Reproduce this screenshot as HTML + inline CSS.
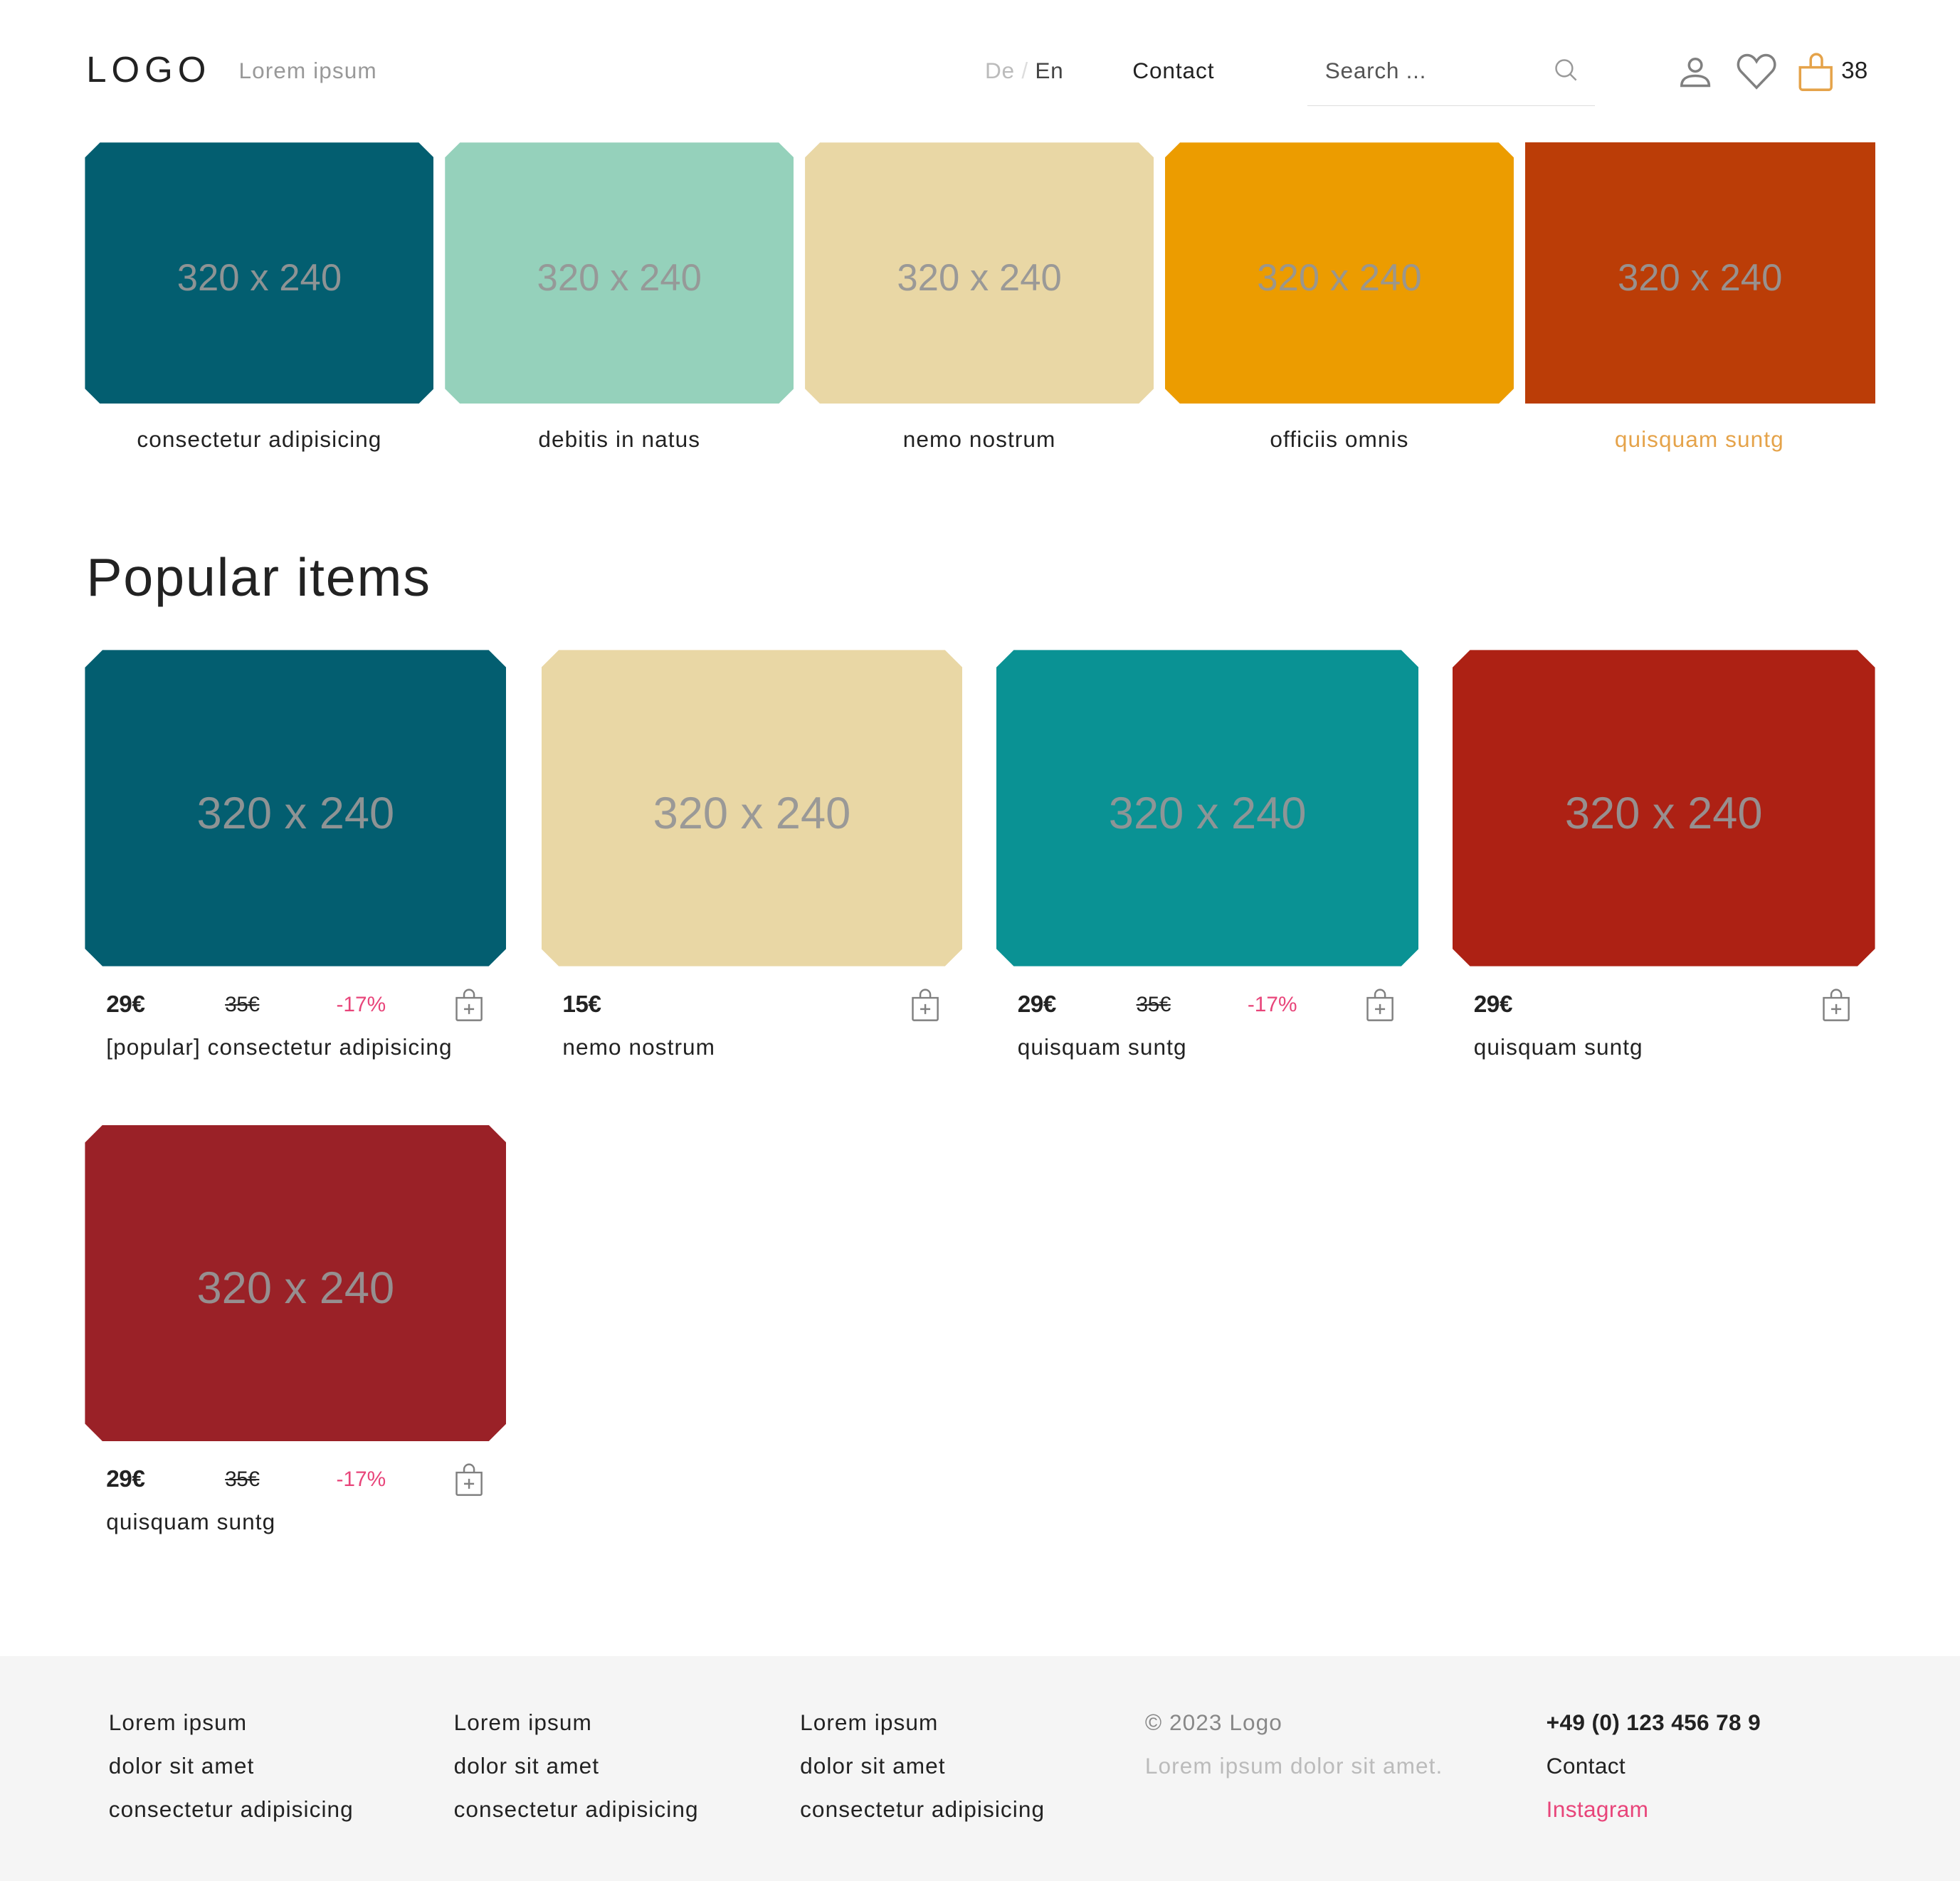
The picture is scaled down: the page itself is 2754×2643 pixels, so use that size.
<!DOCTYPE html>
<html><head><meta charset="utf-8"><style>
html,body{margin:0;padding:0;background:#fff}
body{width:1568px;height:1501px;zoom:1.75638;position:relative;overflow:hidden;font-family:"Liberation Sans",sans-serif;color:#222}
.a{position:absolute;white-space:nowrap}
.t{position:absolute;display:flex;align-items:center;justify-content:center;color:rgba(150,150,150,.95);font-size:30px;padding-top:8px;box-sizing:border-box}
.cut{clip-path:polygon(12px 0,calc(100% - 12px) 0,100% 12px,100% calc(100% - 12px),calc(100% - 12px) 100%,12px 100%,0 calc(100% - 12px),0 12px)}
.cut2{clip-path:polygon(14px 0,calc(100% - 14px) 0,100% 14px,100% calc(100% - 14px),calc(100% - 14px) 100%,14px 100%,0 calc(100% - 14px),0 14px)}
.lab{position:absolute;width:279px;text-align:center;font-size:18px;top:341px;letter-spacing:.6px}
.p{font-size:36px}
.pr{font-weight:bold;font-size:19px;letter-spacing:-.3px}
.old{font-size:17px;text-decoration:line-through;letter-spacing:-.3px}
.dis{font-size:17px;color:#e8457a}
.nm{font-size:18px;letter-spacing:.6px}
.f{font-size:18px;line-height:34.5px;position:absolute;top:1361px;letter-spacing:.6px}
</style></head><body>
<div class="a" style="left:69px;top:39px;font-size:29px;letter-spacing:4px">LOGO</div>
<div class="a" style="left:191px;top:46px;font-size:18px;color:#999;letter-spacing:.6px">Lorem ipsum</div>
<div class="a" style="left:788px;top:46px;font-size:18px;color:#bbb;letter-spacing:.4px">De <span style="color:#ddd">/</span> <span style="color:#444">En</span></div>
<div class="a" style="left:906px;top:46px;font-size:18px;letter-spacing:.5px">Contact</div>
<div class="a" style="left:1046px;top:84px;width:230px;height:1px;background:#ddd"></div>
<div class="a" style="left:1060px;top:46px;font-size:18px;color:#555;letter-spacing:.4px">Search ...</div>
<svg class="a" style="left:1243px;top:46px" width="20" height="20" viewBox="0 0 20 20" fill="none" stroke="#999" stroke-width="1.4"><circle cx="8.5" cy="8.5" r="6.5"/><path d="M13 13l5 5"/></svg>
<svg class="a" style="left:1340px;top:42px" width="30" height="30" viewBox="0 0 30 30" fill="none" stroke="#808080" stroke-width="2"><circle cx="16" cy="10" r="5"/><path d="M5 26.5c0-6 5-8 11-8s11 2 11 8z"/></svg>
<svg class="a" style="left:1389px;top:42px" width="32" height="30" viewBox="0 0 32 30" fill="none" stroke="#808080" stroke-width="2"><path d="M16 28L3.5 15C-1 10 2 2 8.5 2c3.5 0 6 2.5 7.5 5 1.5-2.5 4-5 7.5-5 6.5 0 9.5 8 5 13z"/></svg>
<svg class="a" style="left:1437px;top:40px" width="32" height="34" viewBox="0 0 32 34" fill="none" stroke="#e5a34a" stroke-width="2"><path d="M11.5 14V8a4.5 4.5 0 0 1 9 0v6"/><path d="M3 14h25v16a2 2 0 0 1-2 2H5a2 2 0 0 1-2-2z"/></svg>
<div class="a" style="left:1473px;top:46px;font-size:19px">38</div>

<div class="t cut" style="left:68px;top:114px;width:279px;height:209px;background:#035e70">320 x 240</div>
<div class="t cut" style="left:356px;top:114px;width:279px;height:209px;background:#95d1bb">320 x 240</div>
<div class="t cut" style="left:644px;top:114px;width:279px;height:209px;background:#e9d7a5">320 x 240</div>
<div class="t cut" style="left:932px;top:114px;width:279px;height:209px;background:#ec9c00">320 x 240</div>
<div class="t" style="left:1220px;top:114px;width:280px;height:209px;background:#bb3d07">320 x 240</div>
<div class="lab" style="left:68px">consectetur adipisicing</div>
<div class="lab" style="left:356px">debitis in natus</div>
<div class="lab" style="left:644px">nemo nostrum</div>
<div class="lab" style="left:932px">officiis omnis</div>
<div class="lab" style="left:1220px;color:#e5a34a">quisquam suntg</div>

<div class="a" style="left:69px;top:438px;font-size:43px;letter-spacing:1px">Popular items</div>

<div class="t cut2 p" style="left:68px;top:520px;width:337px;height:253px;background:#035e70">320 x 240</div>
<div class="t cut2 p" style="left:433px;top:520px;width:337px;height:253px;background:#e9d7a5">320 x 240</div>
<div class="t cut2 p" style="left:797px;top:520px;width:338px;height:253px;background:#0a9294">320 x 240</div>
<div class="t cut2 p" style="left:1162px;top:520px;width:338px;height:253px;background:#ad2114">320 x 240</div>
<div class="t cut2 p" style="left:68px;top:900px;width:337px;height:253px;background:#9a2127">320 x 240</div>

<div class="a pr" style="left:85px;top:793px">29€</div><div class="a old" style="left:180px;top:794px">35€</div><div class="a dis" style="left:269px;top:794px">-17%</div>
<div class="a nm" style="left:85px;top:827px">[popular] consectetur adipisicing</div>
<div class="a pr" style="left:450px;top:793px">15€</div>
<div class="a nm" style="left:450px;top:827px">nemo nostrum</div>
<div class="a pr" style="left:814px;top:793px">29€</div><div class="a old" style="left:909px;top:794px">35€</div><div class="a dis" style="left:998px;top:794px">-17%</div>
<div class="a nm" style="left:814px;top:827px">quisquam suntg</div>
<div class="a pr" style="left:1179px;top:793px">29€</div>
<div class="a nm" style="left:1179px;top:827px">quisquam suntg</div>
<div class="a pr" style="left:85px;top:1173px">29€</div><div class="a old" style="left:180px;top:1174px">35€</div><div class="a dis" style="left:269px;top:1174px">-17%</div>
<div class="a nm" style="left:85px;top:1207px">quisquam suntg</div>

<svg width="0" height="0" style="position:absolute"><defs><g id="bag" fill="none" stroke="#808080" stroke-width="1.4"><path d="M8 8V5.5a4 4 0 0 1 8 0V8"/><path d="M2 8h20v17a1 1 0 0 1-1 1H3a1 1 0 0 1-1-1z"/><path d="M12 13v8M8 17h8"/></g></defs></svg>
<svg class="a" style="left:363px;top:790px" width="24" height="28"><use href="#bag"/></svg>
<svg class="a" style="left:728px;top:790px" width="24" height="28"><use href="#bag"/></svg>
<svg class="a" style="left:1092px;top:790px" width="24" height="28"><use href="#bag"/></svg>
<svg class="a" style="left:1457px;top:790px" width="24" height="28"><use href="#bag"/></svg>
<svg class="a" style="left:363px;top:1170px" width="24" height="28"><use href="#bag"/></svg>

<div class="a" style="left:0;top:1325px;width:1568px;height:180px;background:#f5f5f5"></div>
<div class="f" style="left:87px">Lorem ipsum<br>dolor sit amet<br>consectetur adipisicing</div>
<div class="f" style="left:363px">Lorem ipsum<br>dolor sit amet<br>consectetur adipisicing</div>
<div class="f" style="left:640px">Lorem ipsum<br>dolor sit amet<br>consectetur adipisicing</div>
<div class="f" style="left:916px;color:#888">© 2023 Logo<br><span style="color:#bbb">Lorem ipsum dolor sit amet.</span></div>
<div class="f" style="left:1237px;letter-spacing:.2px"><b>+49 (0) 123 456 78 9</b><br>Contact<br><span style="color:#e8457a">Instagram</span></div>
</body></html>
